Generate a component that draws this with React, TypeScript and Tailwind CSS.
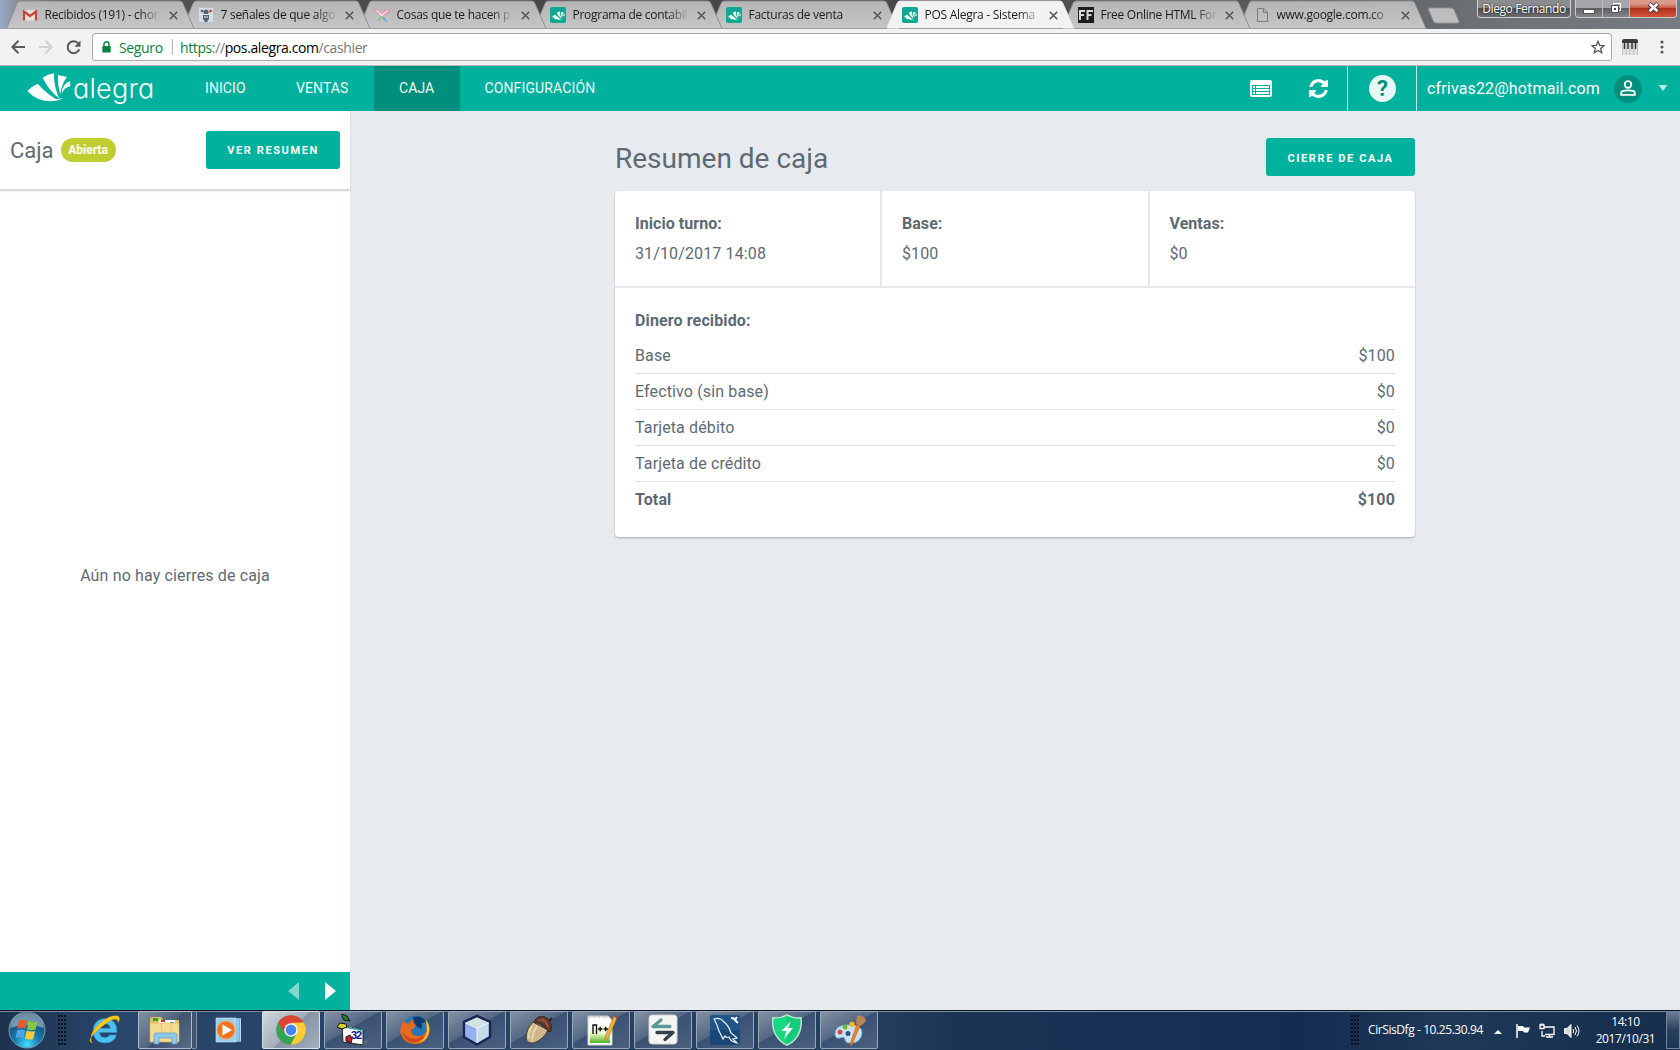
import React from "react";

const Leaf = ({ className }: { className?: string }) => (
  <svg viewBox="80 212 132 90" className={className} fill="#fff">
    <path d="M81 269 Q94 255 112 247 Q132 270 167 294 L188 290 Q172 300 152 300 Q110 300 81 269Z" />
    <path d="M127 229 Q142 219 161 216 Q160 254 176 291 Q146 268 127 229Z" />
    <path d="M173 221 L200 227 Q184 246 180 278 Q171 250 173 221Z" />
    <path d="M186 263 Q194 244 209 240 L210 255 Q195 256 184 276Z" />
  </svg>
);

const AlegraFav = () => (
  <span className="flex size-4 items-center justify-center rounded-[2px] bg-[#0fa894]">
    <Leaf className="h-[9px] w-[13px]" />
  </span>
);

const GmailFav = () => (
  <svg viewBox="0 0 16 16" className="size-4">
    <path d="M1 3h14v10.500H1z" fill="#e3e1e0" />
    <path d="M2 13.500V4.500L8 9l6-4.500v9" fill="none" stroke="#c9453a" strokeWidth="2.200" />
  </svg>
);
const RobotFav = () => (
  <svg viewBox="0 0 16 16" className="size-4">
    <path d="M.5 .5h15v15H.5z" fill="#cfe0e6" stroke="#b5c4c9" />
    <circle cx="8" cy="5" r="2.600" fill="#56606f" />
    <path d="M5 8h6v4l-2 3H7l-2-3z" fill="#56607a" />
    <circle cx="12.500" cy="4" r="1.600" fill="#e04a3c" />
    <circle cx="4" cy="4" r="1.300" fill="#7a4668" />
    <path d="M6 10h4M6 7.500h4" stroke="#e6eef0" />
  </svg>
);
const FlowerFav = () => (
  <svg viewBox="0 0 16 16" className="size-4">
    <path d="M8 9Q1 7 0 2q6 0 8 6Q10 1 16 2q-1 6-8 7" fill="#e593a8" />
    <path d="M2.500 3.500l5.500 5 5.500-5" stroke="#f8e2e7" fill="none" strokeWidth="1.300" />
    <path d="M8 9Q4 10 4 14q3-1 4-5" fill="#97bd62" />
    <path d="M8 9q4 2 5 6-4-1-5-6" fill="#5bb0dc" />
  </svg>
);
const FFFav = () => (
  <svg viewBox="0 0 16 16" className="size-4">
    <path d="M0 0h16v16H0z" fill="#1b1e21" />
    <path d="M2 13V4h5M2 8h4M9.500 13V4h5.500M9.500 8h4" fill="none" stroke="#d9d9d9" strokeWidth="2" />
  </svg>
);
const PageFav = () => (
  <svg viewBox="0 0 16 16" className="size-4" fill="none" stroke="#7a7a7a">
    <path d="M3.500 1.500h6l4 4v9h-10zM9.500 1.500v4h4" />
  </svg>
);

const tabs = [
  { t: "Recibidos (191) - chor", icon: <GmailFav />, z: "z-[9]" },
  { t: "7 señales de que algo", icon: <RobotFav />, z: "z-[8]" },
  { t: "Cosas que te hacen p", icon: <FlowerFav />, z: "z-[7]" },
  { t: "Programa de contabil", icon: <AlegraFav />, z: "z-[6]" },
  { t: "Facturas de venta", icon: <AlegraFav />, z: "z-[5]" },
  { t: "POS Alegra - Sistema", icon: <AlegraFav />, z: "z-[20]", on: true },
  { t: "Free Online HTML For", icon: <FFFav />, z: "z-[3]" },
  { t: "www.google.com.co", icon: <PageFav />, z: "z-[2]" },
];

function Tabs() {
  return (
    <div className="relative flex h-[29px] shrink-0 bg-[linear-gradient(90deg,#9aa9c4_0px,#8b94a3_14px,#55575a_60px,#434547_500px,#4a4b4e_1000px,#5d6064_1340px,#6f7276_1500px,#777b82_1680px)] pl-[7px]">
      {tabs.map((tab) => (
        <div key={tab.t} className={`relative -mr-3 flex h-[29px] w-[188px] items-center pl-[15px] pt-px ${tab.z}`}>
          <svg className="absolute inset-0 h-[29px] w-[188px]" viewBox="0 0 188 29">
            <defs>
              <linearGradient id="tabfill" x1="0" y1="0" x2="0" y2="1">
                <stop offset="0" stopColor="#b4b4b4" />
                <stop offset="1" stopColor="#c6c6c6" />
              </linearGradient>
            </defs>
            <path
              d="M-.5 28.500 L10 3.500 Q11 1 13 1 H173 Q175 1 176 3.500 L187 28.500"
              fill={tab.on ? "#f2f2f2" : "url(#tabfill)"}
              stroke={tab.on ? "#e0e0e0" : "#8d8d8d"}
            />
            {!tab.on && <path d="M0 28.500H188" stroke="#9b9b9b" />}
          </svg>
          <span className="relative size-4">{tab.icon}</span>
          <span className="relative ml-[6.5px] w-[117px] overflow-hidden whitespace-nowrap text-[12px] leading-[18px] tracking-[-0.27px] text-[#1c1c1c] [mask-image:linear-gradient(90deg,#000_94px,transparent_117px)]">
            {tab.t}
          </span>
          <svg viewBox="0 0 9 9" className="relative ml-[7px] size-[9px]" stroke="#555" strokeWidth="1.600">
            <path d="M.8 .8l7.400 7.400M8.200 .8L.8 8.200" />
          </svg>
        </div>
      ))}
      <svg viewBox="0 0 36 18" className="relative ml-[12px] mt-[7px] h-[18px] w-9">
        <path d="M1.500 2.500Q1 1 3 1h21q2 0 3 2l5 11.500q.8 1.500-1.500 1.500H9q-2 0-2.700-2z" fill="#bdbdbf" stroke="#909295" />
      </svg>
      <div className="ml-auto mr-[3px] flex h-[18px] items-start">
        <div className="mr-[4px] flex h-[18px] w-[94px] items-center justify-center rounded-b-[4px] border border-t-0 border-[#d0d2d4] bg-[linear-gradient(#8a8c8f_0_45%,#4c4e51_46%,#6b6d70)] text-[12px] tracking-[-0.4px] text-white [text-shadow:0_0_2px_#000]">
          Diego Fernando
        </div>
        <div className="flex h-[18px] w-[102px] overflow-hidden rounded-b-[4px] border border-t-0 border-[#c9cbce]">
          <div className="flex w-[27px] items-center justify-center border-r border-[#b9bbbe] bg-[linear-gradient(#a5a7aa_0_45%,#5c5e62_46%,#84868a)]">
            <span className="mt-[5px] h-[5px] w-[12px] border border-[#555] bg-white" />
          </div>
          <div className="flex w-[27px] items-center justify-center border-r border-[#b9bbbe] bg-[linear-gradient(#a5a7aa_0_45%,#5c5e62_46%,#84868a)]">
            <svg viewBox="0 0 12 12" className="-mt-0.5 size-3">
              <path d="M3.500 1.500h7v7h-7z" fill="none" stroke="#fff" />
              <path d="M1.500 3.500h7v7h-7z" fill="#fff" stroke="#4b4d57" />
              <path d="M4 6h2v2H4z" fill="#444" />
            </svg>
          </div>
          <div className="flex flex-1 items-center justify-center bg-[linear-gradient(#dc9a8b_0_20%,#c9634b_44%,#ac2d16_46%,#d2573a)]">
            <svg viewBox="0 0 13 11" className="-mt-0.5 h-[11px] w-[13px]">
              <path d="M2 1.500l9 8M11 1.500l-9 8" stroke="#4b3040" strokeWidth="4.500" />
              <path d="M2.500 1.700l8 7.600M10.500 1.700l-8 7.600" stroke="#fff" strokeWidth="2.600" />
            </svg>
          </div>
        </div>
      </div>
    </div>
  );
}

function Toolbar() {
  return (
    <div className="flex h-[37px] shrink-0 items-center border-b border-[#b6b4b6] bg-[#f2f2f2] pl-[11px]">
      <svg viewBox="0 0 14 14" className="size-[14px]" fill="none" stroke="#5a5a5a" strokeWidth="2">
        <path d="M14 7H1.500M7.500 .8L1.400 7l6.100 6.200" />
      </svg>
      <svg viewBox="0 0 14 14" className="ml-[14px] size-[14px]" fill="none" stroke="#d2d2d2" strokeWidth="2">
        <path d="M0 7h12.500M6.500 .8L12.600 7l-6.100 6.200" />
      </svg>
      <svg viewBox="0 0 15 15" className="ml-[13px] mr-px size-[15px]" fill="none" stroke="#5a5a5a" strokeWidth="2">
        <path d="M12.300 3.300A6 6 0 1 0 13.300 9.300" />
        <path d="M14.500 .5v6.200H8.300z" fill="#5a5a5a" stroke="none" />
      </svg>
      <div className="ml-[10px] flex h-7 w-[1520px] items-center rounded-[3px] border border-[#a9a9a9] bg-white pl-[9px] text-[14px]">
        <svg viewBox="0 0 9 12" className="h-3 w-[9px]">
          <path d="M.3 5h8.400v6.500H.3z" fill="#0b8043" />
          <path d="M2 5.500V3.200a2.500 2.500 0 0 1 5 0v2.300" fill="none" stroke="#0b8043" strokeWidth="1.400" />
        </svg>
        <span className="ml-[8px] w-[45px] whitespace-nowrap tracking-[-0.35px] text-[#0b8043]">Seguro</span>
        <span className="ml-[8px] h-4 w-px bg-[#b5b5b5]" />
        <span className="ml-[7px] whitespace-nowrap tracking-[-0.39px] text-[#777]">
          <span className="text-[#0b8043]">https</span>://<span className="text-black">pos.alegra.com</span>/cashier
        </span>
        <svg viewBox="0 0 14 14" className="ml-auto mr-[6px] size-[14px]" fill="none" stroke="#555" strokeWidth="1.300">
          <path d="M7 1.300l1.700 4 4.300.4-3.300 2.800 1 4.200L7 10.500l-3.700 2.200 1-4.200L1 5.700l4.300-.4z" />
        </svg>
      </div>
      <svg viewBox="0 0 16 16" className="ml-[10px] size-4">
        <path d="M0 2q0-2 2-2h12q2 0 2 2v3H0z" fill="#3a3a3a" />
        <path d="M0 4h16v12H0z" fill="#e4e4e4" />
        <path d="M2.500 3v7M6 3v7M10 3v7M13.500 3v7" stroke="#333" strokeWidth="1.500" />
        <path d="M.5 5v11M4.300 5v11M8 5v11M11.800 5v11M15.500 5v11" stroke="#aaa" strokeWidth=".7" />
      </svg>
      <svg viewBox="0 0 4 14" className="ml-[22px] h-[14px] w-1" fill="#5a5a5a">
        <circle cx="2" cy="2" r="1.600" />
        <circle cx="2" cy="7" r="1.600" />
        <circle cx="2" cy="12" r="1.600" />
      </svg>
    </div>
  );
}

function Header() {
  return (
    <header className="flex h-[45px] shrink-0 items-center bg-[#00b19d] text-[14px] tracking-[0.08px] text-[#f0fbf9]">
      <Leaf className="-mt-[4px] ml-[27px] h-[30px] w-[44px]" />
      <span className="ml-[2px] w-[81px] whitespace-nowrap font-[Inter] text-[27px] font-light leading-[45px] tracking-[0.25px] text-white [font-feature-settings:'cv11']">alegra</span>
      <nav className="ml-[26px] flex h-full items-center">
        <span className="flex h-full w-[91px] items-center pl-[25px]">INICIO</span>
        <span className="flex h-full w-[103px] items-center pl-[25px]">VENTAS</span>
        <span className="flex h-full w-[86px] items-center bg-[#008f7c] pl-[25px]">CAJA</span>
        <span className="flex h-full items-center pl-[24.5px] tracking-[0.13px]">CONFIGURACIÓN</span>
      </nav>
      <div className="ml-auto flex h-full items-center">
        <svg viewBox="0 0 22 17" className="h-[17px] w-[22px]">
          <rect width="22" height="17" rx="2" fill="#fff" />
          <path d="M2 5.500h18M2 14.500h18M2 8.500h18M2 11.500h18M2.500 5v10M19.500 5v10M5.500 5v10" stroke="#00b19d" fill="none" />
        </svg>
        <svg viewBox="0 0 1536 1536" className="ml-[37px] size-[19px]" fill="#fff">
          <path d="M1511 928q0 5-1 7-64 268-268 434.500T764 1536q-146 0-282.500-55T238 1324l-129 129q-19 19-45 19t-45-19-19-45V960q0-26 19-45t45-19h448q26 0 45 19t19 45-19 45l-137 137q71 66 161 102t187 36q134 0 250-65t186-179q11-17 53-117 8-23 30-23h192q13 0 22.500 9.500t9.500 22.500zm25-800v448q0 26-19 45t-45 19h-448q-26 0-45-19t-19-45 19-45l138-138Q969 256 768 256q-134 0-250 65T332 500q-11 17-53 117-8 23-30 23H50q-13 0-22.500-9.500T18 608v-7q65-268 270-434.500T768 0q146 0 284 55.500T1297 212l130-129q19-19 45-19t45 19 19 45z" />
        </svg>
        <span className="ml-[19px] h-full w-px bg-[#bfece6]" />
        <span className="ml-[21px] flex size-[27px] items-center justify-center rounded-full bg-[#e8f8f6] text-[22px] font-bold leading-none text-[#008f7c]">?</span>
        <span className="ml-[20px] h-full w-px bg-[#bfece6]" />
        <span className="ml-[10px] w-[174px] whitespace-nowrap text-[16px] tracking-[0.16px] text-white">cfrivas22@hotmail.com</span>
        <span className="ml-[13px] flex size-7 items-center justify-center rounded-full bg-[#008f7c]">
          <svg viewBox="0 0 16 16" className="-mt-[2px] size-4" fill="none" stroke="#fff" strokeWidth="1.800">
            <circle cx="8" cy="4.500" r="3.300" />
            <path d="M1.200 14.800v-2q0-2.500 6.800-2.500t6.800 2.500v2z" />
          </svg>
        </span>
        <svg viewBox="0 0 10 6" className="-mt-px ml-[16px] mr-[12px] h-[6px] w-[10px]" fill="#b8e9e3"><path d="M.5 0h9L5 6z" /></svg>
      </div>
    </header>
  );
}

const rows = [
  ["Base", "$100"],
  ["Efectivo (sin base)", "$0"],
  ["Tarjeta débito", "$0"],
  ["Tarjeta de crédito", "$0"],
];

function Main() {
  return (
    <div className="flex min-h-0 flex-1 bg-[#e7ebf0] text-[#5d6a74]">
      <aside className="flex w-[350px] flex-col bg-white">
        <div className="flex h-[79px] items-center border-b border-[#d4d4d4] pl-[10px] pr-[10px] shadow-[0_1px_2px_rgba(0,0,0,0.18)]">
          <span className="pt-px text-[22px]">Caja</span>
          <span className="-mt-px ml-[7px] flex h-6 w-[55px] items-center justify-center rounded-full bg-[#c0cf2f] text-[12px] font-bold text-white">Abierta</span>
          <button className="-mt-px ml-auto h-[38px] w-[134px] rounded-[3px] bg-[#00b19d] pt-[4px] text-[11px] font-bold tracking-[1.6px] text-white">VER RESUMEN</button>
        </div>
        <div className="flex flex-1 items-center justify-center pb-[14px] pt-[3px] text-[16px] tracking-[0.14px]">Aún no hay cierres de caja</div>
        <div className="flex h-[38px] items-center justify-end bg-[#00b19d] pr-[14px]">
          <svg viewBox="0 0 11 18" className="h-[18px] w-[11px]" fill="#80d8ce"><path d="M11 0v18L0 9z" /></svg>
          <svg viewBox="0 0 11 18" className="ml-[26px] h-[18px] w-[11px]" fill="#fff"><path d="M0 0v18l11-9z" /></svg>
        </div>
      </aside>
      <main className="flex flex-1 flex-col pl-[265px]">
        <div className="mt-[27px] flex h-[38px] w-[800px] items-center justify-between">
          <h1 className="pt-[4px] text-[28px] leading-[36px]">Resumen de caja</h1>
          <button className="h-[38px] w-[149px] rounded-[3px] bg-[#00b19d] pt-[4px] text-[11px] font-bold tracking-[1.6px] text-white">CIERRE DE CAJA</button>
        </div>
        <section className="mt-[15px] h-[346px] w-[800px] rounded-[4px] bg-white text-[16px] tracking-[0.13px] shadow-[0_1px_2px_rgba(0,0,0,0.28)]">
          <div className="flex h-[97px] border-b-2 border-[#e7e7e7] leading-[30px]">
            <div className="w-[267px] border-r-2 border-[#e7e7e7] pl-5 pt-[18px]"><b className="tracking-[0.05px]">Inicio turno:</b><div>31/10/2017 14:08</div></div>
            <div className="w-[268px] border-r-2 border-[#e7e7e7] pl-5 pt-[18px]"><b className="tracking-[0.05px]">Base:</b><div>$100</div></div>
            <div className="flex-1 pl-[19.5px] pt-[18px]"><b className="tracking-[0.05px]">Ventas:</b><div>$0</div></div>
          </div>
          <div className="px-5 pt-[17px]">
            <b className="block leading-[32px]">Dinero recibido:</b>
            <div className="mt-px">
              {rows.map(([k, v]) => (
                <div key={k} className="flex h-9 items-center justify-between border-b border-[#dedfe0]"><span>{k}</span><span>{v}</span></div>
              ))}
              <div className="flex h-9 items-center justify-between font-bold"><span>Total</span><span>{"$100"}</span></div>
            </div>
          </div>
        </section>
      </main>
    </div>
  );
}

const Ie = () => (
  <svg viewBox="0 0 32 32" className="size-8">
    <path d="M23 18.500H10.500q.5 5 5.500 5 3.500 0 4.500-2.500h7Q25 29 16 29 5 29 4 17 5 5 16 4.500q12 .5 12 14zM10.700 14.300h10.600q-.5-4.500-5.300-4.500t-5.300 4.500z" fill="#4cc0f0" stroke="#2a8fd0" strokeWidth=".6" />
    <path d="M3 29Q-1 20 10 10T29 2q3 2 0 6.500Q29 4 24 5.500T8 17 3 29z" fill="#f6c81e" stroke="#c8950c" strokeWidth=".4" />
  </svg>
);
const Folder = () => (
  <svg viewBox="0 0 34 32" className="h-8 w-[34px]">
    <path d="M2 5Q2 3 4 3h9l2 3h16v22H2z" fill="#e2bd5d" />
    <path d="M5 4h5v3H5z" fill="#14b52b" />
    <path d="M11 6h16v4H11z" fill="#fff" /><path d="M13 6h4v2h-4z" fill="#d22f24" /><path d="M22 8h4v2h-4z" fill="#2a8fe0" />
    <path d="M2 9h29v19H2z" fill="#f4dc92" stroke="#d9b65a" strokeWidth=".6" />
    <path d="M13 9l1 10M23 11v8" stroke="#e3c26c" strokeWidth="1" />
    <path d="M6 30V21q0-2 2-2h19q2 0 2 2v9h-5v-6H11v6z" fill="#8ecae8" stroke="#5a9bc4" strokeWidth=".7" />
  </svg>
);
const Wmp = () => (
  <svg viewBox="0 0 28 26" className="h-[26px] w-7">
    <path d="M8 1h18v24H8z" fill="#6eb2dc" /><path d="M23 2v22M25.500 2v22" stroke="#cdeaf8" strokeWidth=".8" />
    <path d="M1 1h20v24H1z" fill="#9dcdeb" stroke="#d0e7f5" strokeWidth=".6" />
    <circle cx="11" cy="13" r="9" fill="#ee7320" stroke="#f6a463" /><path d="M7.500 7.500v11l9.500-5.500z" fill="#fff" />
  </svg>
);
const Chrome = () => (
  <svg viewBox="0 0 32 32" className="size-8">
    <circle cx="16" cy="16" r="14.800" fill="#34a353" />
    <path d="M3.200 8.600A14.800 14.800 0 0 1 28.800 8.600L16 9.500l-6.400 9.500z" fill="#de4436" />
    <path d="M28.800 8.600A14.800 14.800 0 0 1 15.500 30.800L22 19l-6-10.300z" fill="#fccc32" />
    <circle cx="16" cy="16" r="6.800" fill="#fff" /><circle cx="16" cy="16" r="5.400" fill="#4587f3" />
  </svg>
);
const Resource = () => (
  <svg viewBox="0 0 32 32" className="size-8">
    <path d="M22 31l6-5 4 1-5 4z" fill="#777" opacity=".6" />
    <path d="M5 12l21 4v15L6 28z" fill="#f7f7f7" stroke="#222" /><path d="M8 13l18 3.500" stroke="#25b6b1" strokeWidth="2" strokeDasharray="3 1" />
    <text x="14" y="25" fontSize="11" fontWeight="bold" fill="#14148c" fontFamily="Liberation Sans" textLength="11">32</text>
    <path d="M5 0l5 2 3 5-6-1-2-3z" fill="#267a2b" stroke="#111" /><path d="M0 13l3-4 6 1 1 3-5 2z" fill="#d8d02a" stroke="#111" /><path d="M9 23l4-2 2 4-1 4-5-2z" fill="#c9202a" stroke="#111" />
  </svg>
);
const Firefox = () => (
  <svg viewBox="0 0 32 32" className="size-8">
    <circle cx="17" cy="15" r="13.500" fill="#2a76b5" /><path d="M14 3q9-2 13 5l-5 1q2 3 0 6l-6-4z" fill="#133a6c" />
    <path d="M27 6q5 6 3 14-3 9-12 10Q5 31 1.500 19 .5 12 5 6l1 3 5 .5Q10 6 14 6q-1 3 3 5l-3 4-2 1q1 6 7 6 8 0 9-8 0-4-1-8z" fill="#e66a1d" />
    <path d="M27 6q5 7 2.500 14-3 8-10 9 8-5 8.500-12z" fill="#fbc13a" />
    <path d="M4 18q5 8 14 7l8-4q-4 7-12 7T4 18z" fill="#d2451e" />
  </svg>
);
const Cube = () => (
  <svg viewBox="0 0 32 32" className="size-8">
    <path d="M16 2l13 6v15l-13 7.500L3 23V8z" fill="#9db8e0" stroke="#1c2458" strokeWidth="2.500" strokeLinejoin="round" />
    <path d="M16 3.500l11.500 5L16 14 4.500 8.500z" fill="#cfe4e1" /><path d="M4.500 8.500L16 14v15L4.500 22z" fill="#95aff0" /><path d="M27.500 8.500L16 14v15l11.500-7z" fill="#c6dbe8" /><path d="M16 14v15M4.500 9L16 14l11.500-5" fill="none" stroke="#f1f8ff" />
  </svg>
);
const Acorn = () => (
  <svg viewBox="0 0 32 32" className="size-8">
    <path d="M10 8Q3 15 3 24q1 6 8 5 10-4 14-13z" fill="#cfb78b" stroke="#4b3622" /><path d="M9 12Q5 18 6 25M14 12q-5 8-5 15" stroke="#e9dab7" strokeWidth="1.500" fill="none" />
    <path d="M11 8Q14 1 22 3q8 4 6 14-2 2-4-1Q20 9 11 8z" fill="#6b382b" stroke="#3a2019" /><path d="M26 7l3-3" stroke="#3a2019" strokeWidth="2" /><path d="M15 6q7-1 10 7M19 4q4 3 6 8" stroke="#9a6656" fill="none" />
  </svg>
);
const Notepad = () => (
  <svg viewBox="0 0 32 32" className="size-8">
    <defs><linearGradient id="npg" x1="0" y1="0" x2="0" y2="1"><stop offset=".1" stopColor="#fff" /><stop offset=".55" stopColor="#eaf7c8" /><stop offset="1" stopColor="#4cb31c" /></linearGradient></defs>
    <path d="M3 2h20l4 4v25H3z" fill="#fff" stroke="#ccc" /><path d="M5 8h20v21H5z" fill="url(#npg)" /><path d="M4 3h19" stroke="#888" strokeDasharray="1 1.500" />
    <path d="M8 20v-9h3.500v9M13 15h4.500M15.200 12.800v4.500M18.500 15h4.500M20.700 12.800v4.500" fill="none" stroke="#111" strokeWidth="1.400" />
    <path d="M29 2l3 2-9 20-3 3 0-4z" fill="#eeb536" stroke="#a6701d" strokeWidth=".6" /><path d="M29 2l1-1 3 2-1 2z" fill="#b34545" />
  </svg>
);
const Arrows = () => (
  <svg viewBox="0 0 32 32" className="size-8">
    <rect x="2" y="1" width="28" height="29" rx="3" fill="#f5f6f4" stroke="#d0d0cf" />
    <path d="M14 6L6 12.500h17" fill="none" stroke="#5d9996" strokeWidth="3.300" strokeLinecap="round" strokeLinejoin="round" />
    <path d="M10 18.500h16L18 25.500" fill="none" stroke="#34434a" strokeWidth="3.300" strokeLinecap="round" strokeLinejoin="round" />
  </svg>
);
const Dolphin = () => (
  <svg viewBox="0 0 32 32" className="size-8">
    <rect x="1" y="1" width="30" height="30" rx="2" fill="#20558a" /><path d="M1 16h30v13q0 2-2 2H3q-2 0-2-2z" fill="#174878" />
    <path d="M5 5q6-2 10 3 5 4 7 11l6 5-4 1 4 4q-6-1-8-6-3 1-4-1l-2 3q-2-4-4-8Q8 10 5 5z" fill="none" stroke="#eef4f8" strokeWidth="1.200" />
    <path d="M22 4l3 .5 1 1.500 3 3M28 3l-2 3" fill="none" stroke="#f4f7fa" strokeWidth="2" />
  </svg>
);
const Shield = () => (
  <svg viewBox="0 0 32 32" className="size-8">
    <path d="M16 .8q7 4 14 3Q32 23 16 31.200 0 23 2 3.800q7 1 14-3z" fill="#13cb78" stroke="#bfe6d4" strokeWidth="1.500" /><path d="M16 2v28Q2 22 3.500 5 10 5 16 2z" fill="#16d983" />
    <path d="M20 7L10.500 17h5L13 25l9-11h-5z" fill="#fff" />
  </svg>
);
const Paint = () => (
  <svg viewBox="0 0 34 32" className="h-8 w-[34px]">
    <path d="M3 20q0-9 13-9 14-1 14 8-1 10-12 10-5 0-5-4-1-3-5-1Q3 25 3 20z" fill="#c9e3f3" stroke="#7eb0d0" />
    <circle cx="8" cy="18" r="2.500" fill="#d14a4a" /><circle cx="13" cy="13" r="2.500" fill="#71b73d" /><circle cx="20" cy="10.500" r="2.700" fill="#f0be2a" /><circle cx="16" cy="19.500" r="2.500" fill="#2c5584" />
    <path d="M25 2q6-2 9 4-2 5-7 6l-3-2q0-4 1-8z" fill="#b9855a" /><path d="M25 10l3 2-8 19-2 1 1-5z" fill="#e58326" stroke="#a8541a" strokeWidth=".5" />
  </svg>
);

const pinned = [Resource, Firefox, Cube, Acorn, Notepad, Arrows, Dolphin, Shield, Paint];

const Grip = () => (
  <span className="h-[31px] w-[9px] bg-[radial-gradient(circle_at_1px_1px,#05101f_0.8px,transparent_1.3px)] bg-[length:3px_4px]" />
);

function Taskbar() {
  return (
    <footer className="flex h-10 shrink-0 items-center border-t border-[#0a1322] bg-[linear-gradient(90deg,#1d334f_0px,#29466b_120px,#24405f_860px,#1b3456_960px,#142c50_1300px,#1e3858_1450px,#162d4b_1680px)] pb-px shadow-[inset_0_1px_0_#7b8b9d]">
      <svg viewBox="0 0 40 38" className="ml-[7px] h-[38px] w-10">
        <defs><radialGradient id="orb" cx=".5" cy=".9" r=".9"><stop offset="0" stopColor="#3ee0ff" /><stop offset=".4" stopColor="#1779ad" /><stop offset="1" stopColor="#153955" /></radialGradient></defs>
        <circle cx="20" cy="19" r="18" fill="url(#orb)" stroke="#829aac" />
        <path d="M3 17Q4 2 20 2t17 15q-17-6-34 0z" fill="#c8dbe5" opacity=".5" />
        <path d="M12 10q4-2 8-.5l-1.500 8q-4-1.500-8 .3z" fill="#e95a28" /><path d="M21.500 10q4 2 9 .5l-2 8q-4 1.500-8.500-.3z" fill="#8bc43f" />
        <path d="M10 19.500q4-2 8-.3l-1.500 8q-4-2-8 0z" fill="#4ba6e8" /><path d="M19.600 19.500q4 2 8.500.4l-2 8q-4 1.500-8-.3z" fill="#fccb36" />
      </svg>
      <span className="ml-[11px] flex"><Grip /></span>
      <span className="ml-[22px]"><Ie /></span>
      <span className="ml-[17px] flex h-[38px] w-[54px] items-center justify-center rounded-[2px] border border-[#b1bac6] bg-[linear-gradient(135deg,#8391a3,#4f637e_50%,#3d5371_51%,#5a6d87)]"><Folder /></span>
      <span className="h-[38px] w-[5px] rounded-r-[2px] border border-l-0 border-[#8492a5] bg-[#3f5573]" />
      <span className="ml-[18px] w-7"><Wmp /></span>
      <span className="ml-[19px] flex h-[38px] w-[58px] items-center justify-center rounded-[2px] border border-[#dde1e6] bg-[linear-gradient(135deg,#d3d7dc,#a3adba_50%,#8593a5_51%,#a4afbd)]"><Chrome /></span>
      {pinned.map((Icon, i) => (
        <span key={i} className="ml-[4px] flex h-[38px] w-[58px] items-center justify-center rounded-[2px] border border-[#9aa7b7] bg-[linear-gradient(150deg,#8391a4,#536885_45%,#3b5274_46%,#49607f)]"><Icon /></span>
      ))}
      <div className="ml-auto flex h-full items-center text-[12px] text-white">
        <Grip />
        <span className="ml-[8px] w-[116px] whitespace-nowrap tracking-[-0.42px]">CirSisDfg - 10.25.30.94</span>
        <svg viewBox="0 0 8 4" className="ml-[10px] mt-[3px] h-1 w-2" fill="#fff"><path d="M0 4h8L4 0z" /></svg>
        <svg viewBox="0 0 16 16" className="ml-[13px] mt-[2px] size-4"><path d="M2 1v14" stroke="#fff" strokeWidth="1.500" /><path d="M3 3h5l1 1.500h6L13 9.500H9L8 8H3z" fill="#fff" /></svg>
        <svg viewBox="0 0 16 16" className="ml-[8px] mt-[2px] size-4" fill="none" stroke="#fff" strokeWidth="1.300"><path d="M5 4h10v7.500H6M7 14h7M10.500 12v2M3 8v5h3M1 2h4v3.500H1zM2 .5V2M4 .5V2" /></svg>
        <svg viewBox="0 0 16 16" className="ml-[9px] mt-[2px] size-4" fill="none" stroke="#fff"><path d="M.5 5.500H3l4-4v13l-4-4H.5z" fill="#ddd" /><path d="M9 6q1.500 2 0 4M11 4q3 4 0 8M13 2.500q4 5.500 0 11" /></svg>
        <span className="ml-[13px] flex w-[65px] flex-col items-center leading-[17px] tracking-[-0.4px]"><span>14:10</span><span>2017/10/31</span></span>
        <span className="ml-[8px] h-[38px] w-[14px] border border-[#73849b] bg-[linear-gradient(#6d7e91,#27415f_50%,#1a3554)]" />
      </div>
    </footer>
  );
}

export default function App() {
  return (
    <div className="flex h-[1050px] w-[1680px] flex-col overflow-hidden font-[Roboto,sans-serif]">
      <div className="shrink-0 font-['Open_Sans','Noto_Sans',sans-serif]"><Tabs /><Toolbar /></div>
      <Header />
      <Main />
      <div className="shrink-0 font-['Open_Sans','Noto_Sans',sans-serif]"><Taskbar /></div>
    </div>
  );
}
